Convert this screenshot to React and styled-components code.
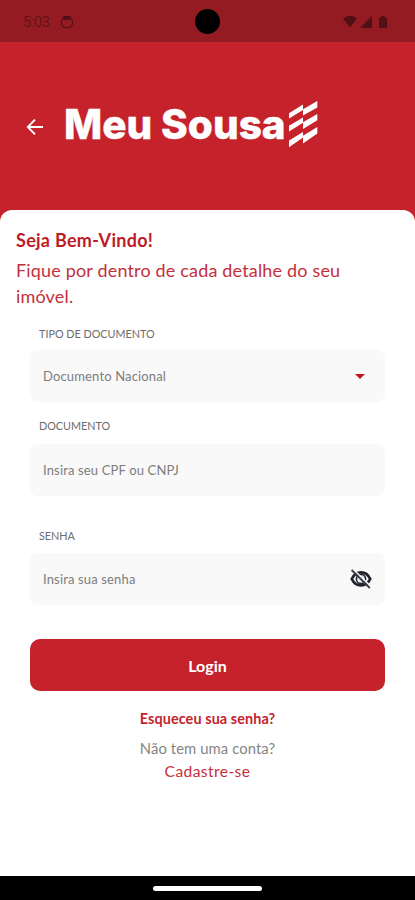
import React from 'react'
import styled, { createGlobalStyle } from 'styled-components'


const App = () => (
    <>
        <GlobalStyle />
        <Screen>
            <StatusBar>
                <StatusSide>
                    <Clock>5:03</Clock>
                    <svg width="14" height="14" viewBox="0 0 14 14">
                        <circle cx="7" cy="7.4" r="5.6" fill="none" stroke="currentColor" strokeWidth="1.1" />
                        <path d="M3.4 1h7.2v2.6L8.6 5.4 7 4.4 5.4 5.4 3.4 3.8z" fill="currentColor" />
                    </svg>
                </StatusSide>
                <Camera />
                <StatusSide end>
                    <svg width="46" height="14" viewBox="0 0 46 14" fill="currentColor">
                        <path d="M0 3.5Q7-2 14 3.5L7 12.5z" />
                        <path d="M29 1v12H17z" />
                        <path d="M36 2.4h2.2V1h3.4v1.4H44V13h-8z" />
                    </svg>
                </StatusSide>
            </StatusBar>

            <Header>
                <BackButton aria-label="Voltar">
                    <svg width="18" height="18" viewBox="0 0 18 18" fill="none" stroke="currentColor" strokeWidth="1.9">
                        <path d="M17 9H2M9 1.6L1.8 9 9 16.4" />
                    </svg>
                </BackButton>
                <Brand>Meu Sousa</Brand>
                <BrandMark />
            </Header>

            <Sheet>
                <Title>Seja Bem-Vindo!</Title>
                <Lead>Fique por dentro de cada detalhe do seu imóvel.</Lead>
                <Form>
                    <Field label="TIPO DE DOCUMENTO" labelHeight="23px" value="Documento Nacional">
                        <Caret />
                    </Field>
                    <Field label="DOCUMENTO" labelHeight="25px" gap="17px" value="Insira seu CPF ou CNPJ" />
                    <Field label="SENHA" labelHeight="24px" gap="33px" value="Insira sua senha">
                        <EyeOff />
                    </Field>
                    <LoginButton>Login</LoginButton>
                </Form>
                <Links>
                    <Forgot>Esqueceu sua senha?</Forgot>
                    <Question>Não tem uma conta?</Question>
                    <SignUp>Cadastre-se</SignUp>
                </Links>
            </Sheet>

            <NavBar><Handle /></NavBar>
        </Screen>
    </>
)

export default App


const Field = ({ label, labelHeight, value, gap, children }) => (
    <FieldStyled $gap={gap}>
        <Label $height={labelHeight}>{label}</Label>
        <Box>
            <Value>{value}</Value>
            {children}
        </Box>
    </FieldStyled>
)

const BrandMark = () => (
    <Mark width="29" height="48" viewBox="0 0 29 48" fill="currentColor">
        <path d="M0 12.3L14 3.6v5.4L0 17.6z" />
        <path d="M0 24.8L14 16.4v5.4L0 30.4z" />
        <path d="M0 39.4L14 31v5.4L0 46.2z" />
        <path d="M14 8.2L28.3 0v6.4L14 14.6z" />
        <path d="M14 21.2L28.3 13v6.2L14 28z" />
        <path d="M14 34.8L28.3 26v6.4L14 42.6z" />
    </Mark>
)

const EyeOff = () => (
    <svg width="22" height="20" viewBox="0 0 22 20" fill="none">
        <path d="M1.8 10Q4.8 3.4 11 3.4T20.2 10Q17.2 16.4 11 16.4T1.8 10z" stroke="#20222c" strokeWidth="2.8" />
        <circle cx="11" cy="10" r="4.6" stroke="#20222c" strokeWidth="1.6" />
        <circle cx="12" cy="9" r="1.4" fill="#a5a5aa" />
        <path d="M3 0.2L21 17.6" stroke="#f9f9f9" strokeWidth="1.5" />
        <path d="M1.6 1L19.8 19" stroke="#3a3b42" strokeWidth="1.8" />
    </svg>
)

const StatusSide = ({ end, children }) => <StatusSideStyled $end={end}>{children}</StatusSideStyled>


const GlobalStyle = createGlobalStyle`
    *{
        box-sizing:border-box;
    }

    body{
        margin:0;
        background:#fff;
        font-family:Lato, sans-serif;
    }

    button{
        border:0;
        padding:0;
        font-family:inherit;
    }

    svg{
        display:block;
        flex-shrink:0;
    }
`

const Screen = styled.div`
    display:flex;
    flex-direction:column;
    width:415px;
    height:900px;
    overflow:hidden;
    background:#c6222c;
`

const StatusBar = styled.div`
    display:grid;
    grid-template-columns:1fr 25px 1fr;
    align-items:center;
    height:42px;
    padding:0 24px 0 23px;
    background:#931b21;
    color:#4f1115;
`

const StatusSideStyled = styled.div`
    display:flex;
    align-items:center;
    gap:10px;
    padding:1px ${props => props.$end ? '2px' : 0} 0 0;
    justify-content:${props => props.$end ? 'flex-end' : 'flex-start'};
`

const Clock = styled.span`
    font-family:Roboto, sans-serif;
    font-size:14.3px;
    font-weight:300;
    line-height:18px;
`

const Camera = styled.div`
    width:25px;
    height:25px;
    border-radius:50%;
    background:#000;
`

const Header = styled.header`
    display:flex;
    align-items:center;
    height:168px;
    padding:0 0 2px 26px;
    color:#fff;
`

const BackButton = styled.button`
    margin:4px 20px 0 0;
    background:none;
    color:#fff;
`

const Brand = styled.h1`
    width:223px;
    margin:0;
    font-family:Inter, sans-serif;
    font-size:40.5px;
    font-weight:800;
    line-height:48px;
    white-space:nowrap;
    -webkit-text-stroke:0.4px #fff;
`

const Mark = styled.svg`
    margin-left:2px;
`

const Sheet = styled.main`
    flex:1;
    padding:17px 16px 0;
    border-radius:12px 12px 0 0;
    background:#fff;
`

const Title = styled.h2`
    margin:0;
    font-size:18px;
    font-weight:700;
    line-height:26px;
    letter-spacing:0.28px;
    color:#bd1c26;
`

const Lead = styled.p`
    margin:4px 0 0;
    font-size:18px;
    line-height:26px;
    letter-spacing:0.17px;
    color:#c4303a;
`

const Form = styled.form`
    padding:18px 14px 0;
`

const FieldStyled = styled.div`
    padding-top:${props => props.$gap || 0};
`

const Label = styled.label`
    display:block;
    height:${props => props.$height};
    padding-left:9px;
    font-size:10.8px;
    line-height:14px;
    color:#6c6c6c;
`

const Box = styled.div`
    display:flex;
    align-items:center;
    justify-content:space-between;
    height:52px;
    padding:0 13px;
    border-radius:8px;
    background:#f9f9f9;
`

const Value = styled.span`
    font-size:13px;
    line-height:18px;
    letter-spacing:0.15px;
    color:#7d7d7d;
`

const Caret = styled.span`
    margin-right:7px;
    border:solid transparent;
    border-width:5px 5px 0;
    border-top-color:#c0141c;
`

const LoginButton = styled.button`
    display:block;
    width:100%;
    height:52px;
    margin-top:34px;
    border-radius:10px;
    background:#c6222c;
    color:#fff;
    font-size:16px;
    font-weight:700;
`

const Links = styled.div`
    display:flex;
    flex-direction:column;
    align-items:center;
    padding-top:16px;
    font-size:14.8px;
    line-height:23px;
`

const Forgot = styled.a`
    margin-bottom:7px;
    font-size:14.4px;
    font-weight:700;
    letter-spacing:0.1px;
    color:#c3232d;
`

const Question = styled.span`
    letter-spacing:0.1px;
    color:#858585;
`

const SignUp = styled.a`
    font-size:15.6px;
    letter-spacing:0.4px;
    color:#c3303a;
`

const NavBar = styled.div`
    display:flex;
    justify-content:center;
    height:24px;
    padding-top:10px;
    background:#000;
`

const Handle = styled.div`
    width:109px;
    height:5px;
    border-radius:3px;
    background:#fff;
`
